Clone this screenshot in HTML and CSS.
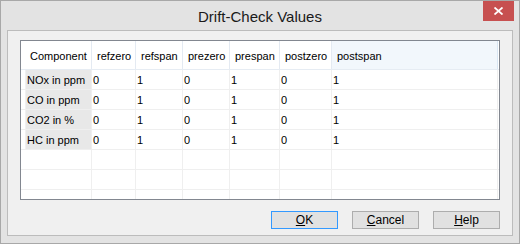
FILE: index.html
```html
<!DOCTYPE html>
<html lang="en">
<head>
    <meta charset="UTF-8">
    <title>Drift-Check Values</title>
    <link rel="stylesheet" href="styles.css">
</head>
<body>
    <div class="window">
        <div class="titlebar">
            <span class="title">Drift-Check Values</span>
            <button class="close-btn">
                <svg width="9" height="8" viewBox="0 0 9 8"><path d="M0.5 0.5 L8.5 7.5 M8.5 0.5 L0.5 7.5" stroke="#fff" stroke-width="1.8"/></svg>
            </button>
        </div>
        <div class="client">
            <div class="grid">
                <div class="row head">
                    <div class="cell c1"><span class="pad"></span>Component</div>
                    <div class="cell c2">refzero</div>
                    <div class="cell c3">refspan</div>
                    <div class="cell c4">prezero</div>
                    <div class="cell c5">prespan</div>
                    <div class="cell c6">postzero</div>
                    <div class="cell c7 sorted">postspan</div>
                </div>
                <div class="row">
                    <div class="cell c1 rowhead">NOx in ppm</div>
                    <div class="cell c2">0</div><div class="cell c3">1</div><div class="cell c4">0</div>
                    <div class="cell c5">1</div><div class="cell c6">0</div><div class="cell c7">1</div>
                </div>
                <div class="row">
                    <div class="cell c1 rowhead">CO in ppm</div>
                    <div class="cell c2">0</div><div class="cell c3">1</div><div class="cell c4">0</div>
                    <div class="cell c5">1</div><div class="cell c6">0</div><div class="cell c7">1</div>
                </div>
                <div class="row">
                    <div class="cell c1 rowhead">CO2 in %</div>
                    <div class="cell c2">0</div><div class="cell c3">1</div><div class="cell c4">0</div>
                    <div class="cell c5">1</div><div class="cell c6">0</div><div class="cell c7">1</div>
                </div>
                <div class="row">
                    <div class="cell c1 rowhead">HC in ppm</div>
                    <div class="cell c2">0</div><div class="cell c3">1</div><div class="cell c4">0</div>
                    <div class="cell c5">1</div><div class="cell c6">0</div><div class="cell c7">1</div>
                </div>
                <div class="row">
                    <div class="cell c1 blank"></div><div class="cell c2"></div><div class="cell c3"></div><div class="cell c4"></div>
                    <div class="cell c5"></div><div class="cell c6"></div><div class="cell c7"></div>
                </div>
                <div class="row">
                    <div class="cell c1 blank"></div><div class="cell c2"></div><div class="cell c3"></div><div class="cell c4"></div>
                    <div class="cell c5"></div><div class="cell c6"></div><div class="cell c7"></div>
                </div>
                <div class="row last">
                    <div class="cell c1 blank"></div><div class="cell c2"></div><div class="cell c3"></div><div class="cell c4"></div>
                    <div class="cell c5"></div><div class="cell c6"></div><div class="cell c7"></div>
                </div>
            </div>
            <div class="buttons">
                <button class="btn default"><u>O</u>K</button>
                <button class="btn"><u>C</u>ancel</button>
                <button class="btn"><u>H</u>elp</button>
            </div>
        </div>
    </div>
</body>
</html>
```

FILE: styles.css
```css
/* dialog */
body {
    margin: 0;
    background-color: #fff;
}

.window {
    width: 520px;
    height: 244px;
    box-sizing: border-box;
    border: 1px solid #a8a8a8;
    background-color: #e3e3e3;
    padding: 0 6px 7px 6px;
    display: flex;
    flex-direction: column;
}

.titlebar {
    position: relative;
    height: 29px;
    display: flex;
    justify-content: center;
    align-items: center;
}

.title {
    font-family: "Liberation Sans", Arial, sans-serif;
    font-size: 15px;
    color: #1a1a1a;
    margin-top: 1px;
}

.close-btn {
    position: absolute;
    top: 0;
    right: -1px;
    width: 31px;
    height: 20px;
    border: none;
    padding: 0;
    background-color: #c75050;
    display: flex;
    justify-content: center;
    align-items: center;
}

.client {
    flex: 1;
    border: 1px solid #bcbcbc;
    background-color: #f0f0f0;
    padding: 9px 12px 5px 12px;
    display: flex;
    flex-direction: column;
}

.grid {
    height: 160px;
    box-sizing: border-box;
    border: 1px solid #828790;
    background-color: #fff;
    overflow: hidden;
    font-family: "Liberation Sans", Arial, sans-serif;
    font-size: 11px;
    color: #000;
}

.row {
    display: flex;
    height: 20px;
    box-sizing: border-box;
    border-bottom: 1px solid #efefef;
}

.row.head {
    height: 29px;
    border-bottom: 1px solid #e6ecf3;
}

.cell {
    box-sizing: border-box;
    border-right: 1px solid #efefef;
    display: flex;
    align-items: center;
    padding-left: 1px;
    padding-top: 1px;
    white-space: nowrap;
}

.head .cell {
    border-right: 1px solid #e4eaf2;
    padding-left: 5px;
    padding-top: 2px;
}

.head .c1 {
    padding-left: 0;
}

.pad {
    width: 9px;
}

.head .sorted {
    background-color: #f2f7fc;
    border-right: 1px solid #d9e6f3;
    padding-left: 5px;
}

.c1 { width: 71px; }
.c2 { width: 44px; }
.c3 { width: 47px; }
.c4 { width: 47px; }
.c5 { width: 50px; }
.c6 { width: 52px; }
.c7 { width: 166px; }

.rowhead,
.blank {
    padding-left: 6px;
    background: linear-gradient(to right, #fff 0, #fff 4px, #f0f0f0 4px, #f0f0f0 5px, #e8e8e8 5px);
    border-right: 1px solid #efefef;
}

.blank {
    background: #fff;
}

.buttons {
    display: flex;
    justify-content: flex-end;
    gap: 14px;
    margin-top: 11px;
}

.btn {
    width: 67px;
    height: 18px;
    box-sizing: border-box;
    border: 1px solid #adadad;
    background-color: #e1e1e1;
    font-family: "Liberation Sans", Arial, sans-serif;
    font-size: 12px;
    color: #000;
    padding: 0;
}

.btn.default {
    border-color: #3399ff;
}
```
